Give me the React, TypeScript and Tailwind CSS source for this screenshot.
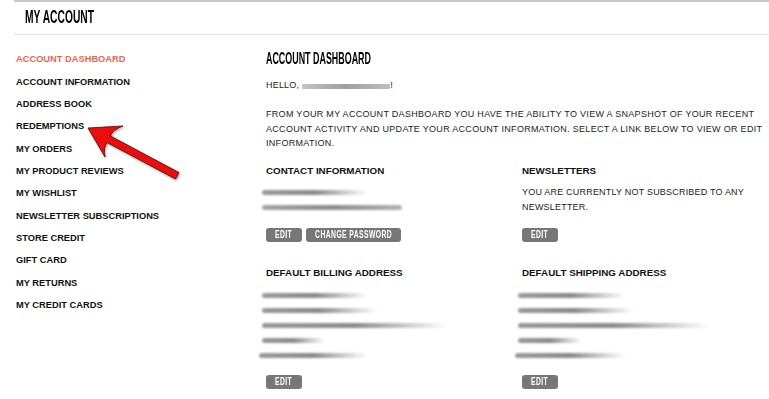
import React from "react";

const sideLinks = [
  "Account Dashboard",
  "Account Information",
  "Address Book",
  "Redemptions",
  "My Orders",
  "My Product Reviews",
  "My Wishlist",
  "Newsletter Subscriptions",
  "Store Credit",
  "Gift Card",
  "My Returns",
  "My Credit Cards",
];

// blurred-out personal data
const Smudge = ({ w, shift = 0, fade = true }: { w: number; shift?: number; fade?: boolean }) => (
  <div className="flex h-[15px] items-center">
    <div
      className={
        fade
          ? "h-[4.5px] rounded-full bg-linear-to-r from-[#9a9a9a] via-[#8a8a8a] to-transparent blur-[0.8px]"
          : "h-[4.5px] rounded-full bg-linear-to-r from-[#a4a4a4] via-[#8c8c8c] to-[#b2b2b2] blur-[0.8px]"
      }
      style={{ width: w, marginLeft: shift }}
    />
  </div>
);

const Btn = ({ label, w }: { label: string; w: number }) => (
  <div
    className="flex h-[14px] items-center justify-center rounded-[3px] bg-[#777]"
    style={{ width: w }}
  >
    <span className="inline-block scale-x-[0.68] whitespace-nowrap text-[10px] font-bold leading-none tracking-[0.6px] text-white">
      {label}
    </span>
  </div>
);

const SectionTitle = ({ children }: { children: React.ReactNode }) => (
  <div className="text-[9.8px] font-bold leading-[14px] text-[#111]">{children}</div>
);

const Arrow = () => (
  <svg className="pointer-events-none absolute left-0 top-0" width="769" height="399">
    <defs>
      <filter id="sh" x="-20%" y="-20%" width="140%" height="140%">
        <feDropShadow dx="1" dy="1.5" stdDeviation="1" floodColor="#000" floodOpacity="0.35" />
      </filter>
    </defs>
    <path
      d="M88,128 L123,126 Q112,130 110.5,136 L179,172.5 L175.5,179 L107,142.5 Q103,148 105,157 Z"
      fill="#ee1111"
      stroke="#3a0a0a"
      strokeWidth="0.8"
      strokeLinejoin="round"
      filter="url(#sh)"
    />
  </svg>
);

export default function App() {
  return (
    <div
      className="relative h-[399px] w-[769px] overflow-hidden bg-white uppercase"
      style={{ fontFamily: '"Liberation Sans", Arial, sans-serif' }}
    >
      <div className="ml-[14px] h-[35px] border-t-2 border-b border-t-[#c8c8c8] border-b-[#e4e4e4] pl-[11px] pt-[4px]">
        <span className="inline-block origin-left scale-x-[0.54] text-[19px] font-bold leading-[20px] text-black">
          My Account
        </span>
      </div>

      <div className="flex">
        <nav className="flex w-[266px] shrink-0 flex-col pl-[16px] pt-[14px]">
          {sideLinks.map((l, i) => (
            <a
              key={l}
              className={
                "flex h-[22.36px] items-center text-[9.3px] font-bold " +
                (i === 0 ? "text-[#ec6552]" : "text-[#111]")
              }
            >
              {l}
            </a>
          ))}
        </nav>

        <main className="w-[500px] text-[9px] text-[#222]">
          <div className="mt-[15px] h-[16px] leading-[16px]">
            <span className="inline-block origin-left scale-x-[0.54] text-[16.5px] font-bold text-black">
              Account Dashboard
            </span>
          </div>
          <div className="mt-[13px] flex h-[14px] items-center tracking-[0.2px]">
            Hello,
            <span className="ml-[3px] inline-block h-[5px] w-[88px] bg-linear-to-r from-[#c4c4c4] via-[#9f9f9f] to-[#c0c0c0] blur-[0.6px]" />
            !
          </div>
          <p className="mt-[14px] leading-[14.5px] tracking-[0.3px]">
            From your My Account Dashboard you have the ability to view a snapshot of your recent account
            activity and update your account information. Select a link below to view or edit information.
          </p>

          <div className="mt-[13px] grid grid-cols-[256px_244px]">
            <div>
              <SectionTitle>Contact Information</SectionTitle>
              <div className="mt-[7.5px]">
                <Smudge w={106} shift={-4} />
                <Smudge w={140} shift={-4} fade={false} />
              </div>
              <div className="mt-[12.5px] flex gap-[4px]">
                <Btn label="Edit" w={36} />
                <Btn label="Change Password" w={95} />
              </div>
            </div>
            <div>
              <SectionTitle>Newsletters</SectionTitle>
              <p className="mt-[7.5px] leading-[15px] tracking-[0.2px]">
                You are currently not subscribed to any newsletter.
              </p>
              <div className="mt-[12.5px]">
                <Btn label="Edit" w={36} />
              </div>
            </div>

            <div className="mt-[24px]">
              <SectionTitle>Default Billing Address</SectionTitle>
              <div className="mt-[8.5px]">
                <Smudge w={106} shift={-4} />
                <Smudge w={115} shift={-4} />
                <Smudge w={186} shift={-4} />
                <Smudge w={63} shift={-4} />
                <Smudge w={109} shift={-7} />
              </div>
              <div className="mt-[11.5px]">
                <Btn label="Edit" w={36} />
              </div>
            </div>
            <div className="mt-[24px]">
              <SectionTitle>Default Shipping Address</SectionTitle>
              <div className="mt-[8.5px]">
                <Smudge w={107} shift={-4} />
                <Smudge w={115} shift={-4} />
                <Smudge w={192} shift={-4} />
                <Smudge w={64} shift={-4} />
                <Smudge w={110} shift={-7} />
              </div>
              <div className="mt-[11.5px]">
                <Btn label="Edit" w={36} />
              </div>
            </div>
          </div>
        </main>
      </div>

      <Arrow />
    </div>
  );
}
